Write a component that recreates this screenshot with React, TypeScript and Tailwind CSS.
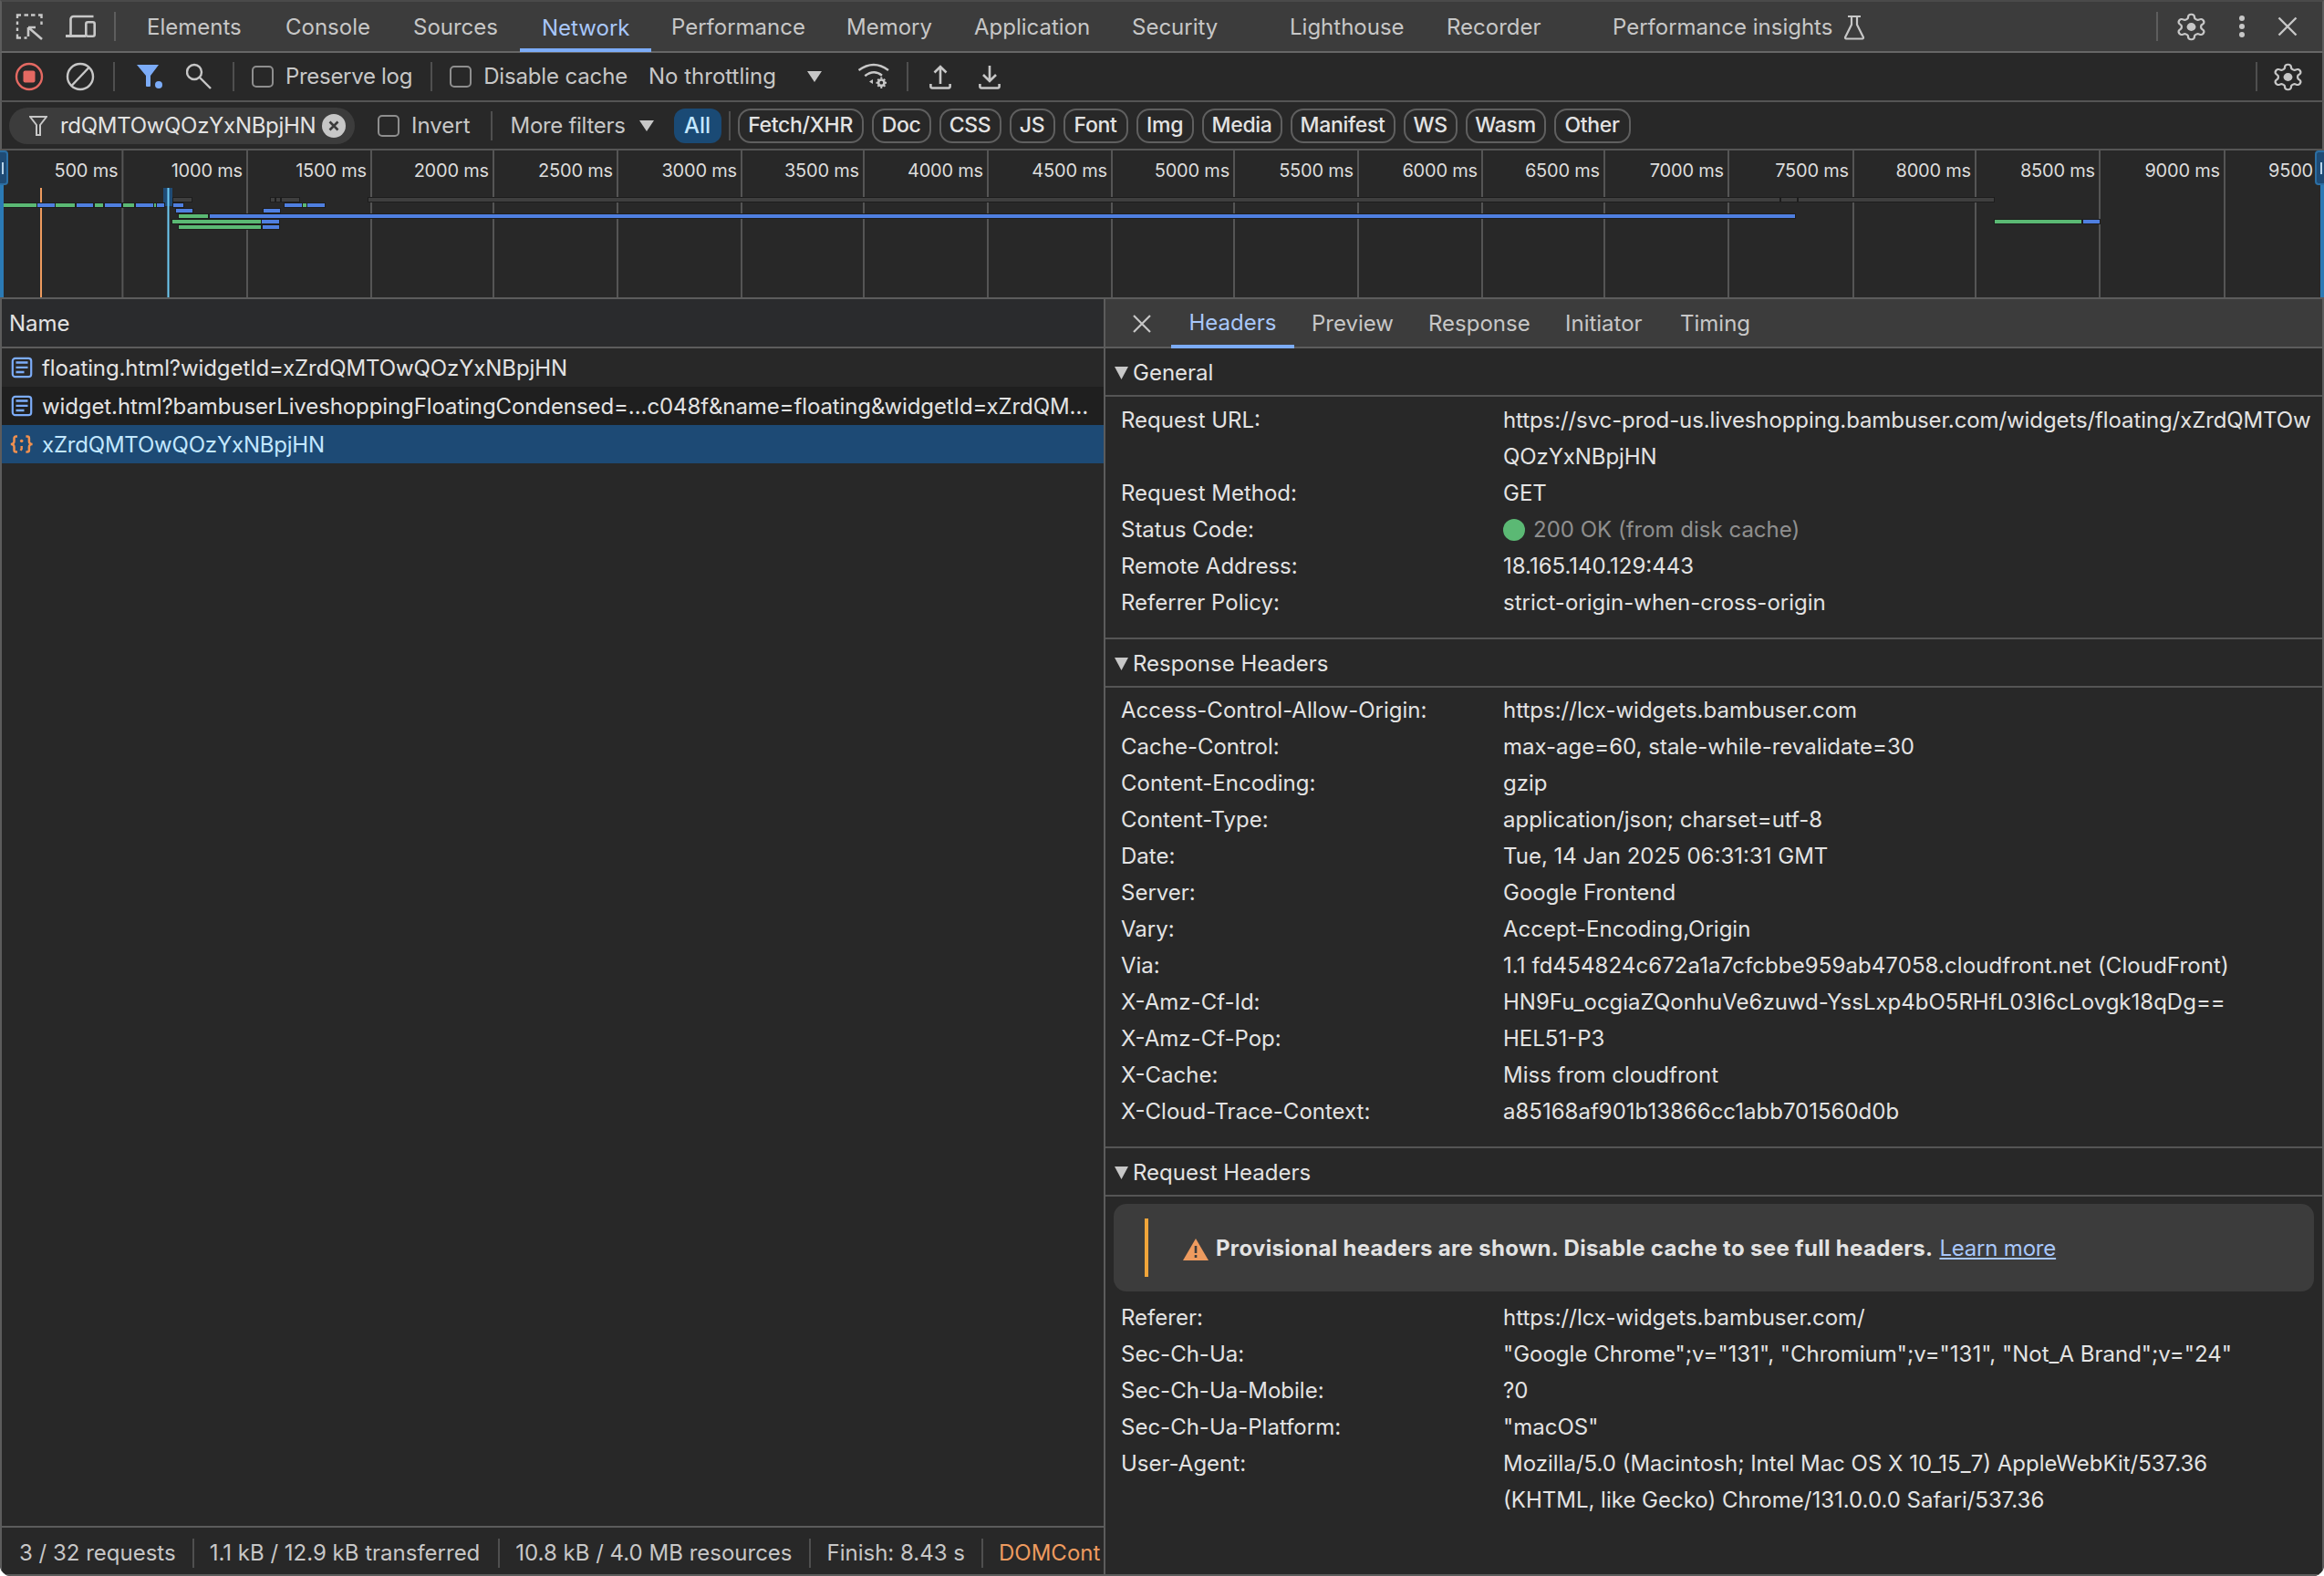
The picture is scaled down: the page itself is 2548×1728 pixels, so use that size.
import { ReactNode } from "react";

const mainTabs = [
  { label: "Elements", cls: "w-[152px]" },
  { label: "Console", cls: "w-[140px]" },
  { label: "Sources", cls: "w-[141px]" },
  { label: "Network", cls: "w-[142px]", active: true },
  { label: "Performance", cls: "w-[192px]" },
  { label: "Memory", cls: "w-[140px]" },
  { label: "Application", cls: "w-[173px]" },
  { label: "Security", cls: "w-[173px]" },
  { label: "Lighthouse", cls: "w-[172px]" },
  { label: "Recorder", cls: "w-[182px]" },
];

const typeChips = [
  { label: "Fetch/XHR", cls: "w-[138px]" },
  { label: "Doc", cls: "w-[65px]" },
  { label: "CSS", cls: "w-[68px]" },
  { label: "JS", cls: "w-[50px]" },
  { label: "Font", cls: "w-[71px]" },
  { label: "Img", cls: "w-[63px]" },
  { label: "Media", cls: "w-[88px]" },
  { label: "Manifest", cls: "w-[115px]" },
  { label: "WS", cls: "w-[59px]" },
  { label: "Wasm", cls: "w-[88px]" },
  { label: "Other", cls: "w-[84px]" },
];

const ticks = [134.4, 271, 407, 541, 677, 813, 947, 1083, 1219, 1353, 1489, 1625, 1759, 1895, 2032, 2166, 2302, 2439];

const green = "#5bb974";
const blue = "#4f7fe0";
const gray = "#3f3f3f";

// x1, x2, y (from the top of the overview), colour
const bars: [number, number, number, string][] = [
  [190, 210, 54, gray],
  [297, 301, 54, gray],
  [303, 307, 54, gray],
  [309, 328, 54, gray],
  [404, 1951, 54, gray],
  [1953, 1970, 54, gray],
  [1972, 2186, 54, gray],
  [4, 40, 60, green],
  [41, 60, 60, blue],
  [61, 82, 60, green],
  [84, 102, 60, blue],
  [104, 113, 60, green],
  [115, 133, 60, blue],
  [135, 147, 60, green],
  [149, 168, 60, blue],
  [169, 171, 60, green],
  [172, 180, 60, blue],
  [190, 201, 60, blue],
  [312, 331, 60, blue],
  [332, 336, 60, green],
  [337, 356, 60, blue],
  [193, 211, 66, blue],
  [289, 307, 66, blue],
  [196, 228, 72, green],
  [230, 1968, 72, blue],
  [189, 286, 78, green],
  [287, 306, 78, blue],
  [2187, 2282, 78, green],
  [2284, 2302, 78, blue],
  [196, 286, 84, green],
  [288, 306, 84, blue],
];

const generalRows: [string, ReactNode][] = [
  [
    "Request URL:",
    <span className="tracking-[-0.1px]">
      https://svc-prod-us.liveshopping.bambuser.com/widgets/floating/xZrdQMTOw<br />QOzYxNBpjHN
    </span>,
  ],
  ["Request Method:", "GET"],
  [
    "Status Code:",
    <span className="flex items-center gap-[9px] text-[#8f8f8f]">
      <span className="h-6 w-6 rounded-full bg-[#5bb974]" />
      200 OK (from disk cache)
    </span>,
  ],
  ["Remote Address:", "18.165.140.129:443"],
  ["Referrer Policy:", "strict-origin-when-cross-origin"],
];

const responseRows: [string, ReactNode][] = [
  ["Access-Control-Allow-Origin:", "https://lcx-widgets.bambuser.com"],
  ["Cache-Control:", "max-age=60, stale-while-revalidate=30"],
  ["Content-Encoding:", "gzip"],
  ["Content-Type:", "application/json; charset=utf-8"],
  ["Date:", "Tue, 14 Jan 2025 06:31:31 GMT"],
  ["Server:", "Google Frontend"],
  ["Vary:", "Accept-Encoding,Origin"],
  ["Via:", <span className="tracking-[0.1px]">1.1 fd454824c672a1a7cfcbbe959ab47058.cloudfront.net (CloudFront)</span>],
  ["X-Amz-Cf-Id:", "HN9Fu_ocgiaZQonhuVe6zuwd-YssLxp4bO5RHfL03I6cLovgk18qDg=="],
  ["X-Amz-Cf-Pop:", "HEL51-P3"],
  ["X-Cache:", "Miss from cloudfront"],
  ["X-Cloud-Trace-Context:", "a85168af901b13866cc1abb701560d0b"],
];

const requestRows: [string, ReactNode][] = [
  ["Referer:", "https://lcx-widgets.bambuser.com/"],
  ["Sec-Ch-Ua:", '"Google Chrome";v="131", "Chromium";v="131", "Not_A Brand";v="24"'],
  ["Sec-Ch-Ua-Mobile:", "?0"],
  ["Sec-Ch-Ua-Platform:", '"macOS"'],
  ["User-Agent:", <>Mozilla/5.0 (Macintosh; Intel Mac OS X 10_15_7) AppleWebKit/537.36<br />(KHTML, like Gecko) Chrome/131.0.0.0 Safari/537.36</>],
];

function Sep({ className = "" }: { className?: string }) {
  return <div className={`w-[2px] shrink-0 bg-[#4f4f4f] ${className}`} />;
}

function Gear() {
  return (
    <svg width="37" height="33" viewBox="0 0 24 24" preserveAspectRatio="none" fill="none" stroke="#c7c7c7" strokeWidth="1.5" strokeLinejoin="round">
      <path d="M12.22 2h-.44a2 2 0 0 0-2 2v.18a2 2 0 0 1-1 1.73l-.43.25a2 2 0 0 1-2 0l-.15-.08a2 2 0 0 0-2.73.73l-.22.38a2 2 0 0 0 .73 2.73l.15.1a2 2 0 0 1 1 1.72v.51a2 2 0 0 1-1 1.74l-.15.09a2 2 0 0 0-.73 2.73l.22.38a2 2 0 0 0 2.73.73l.15-.08a2 2 0 0 1 2 0l.43.25a2 2 0 0 1 1 1.73V20a2 2 0 0 0 2 2h.44a2 2 0 0 0 2-2v-.18a2 2 0 0 1 1-1.73l.43-.25a2 2 0 0 1 2 0l.15.08a2 2 0 0 0 2.73-.73l.22-.39a2 2 0 0 0-.73-2.73l-.15-.08a2 2 0 0 1-1-1.74v-.5a2 2 0 0 1 1-1.74l.15-.09a2 2 0 0 0 .73-2.73l-.22-.38a2 2 0 0 0-2.73-.73l-.15.08a2 2 0 0 1-2 0l-.43-.25a2 2 0 0 1-1-1.73V4a2 2 0 0 0-2-2z" />
      <circle cx="12" cy="12" r="3.2" fill="#c7c7c7" stroke="none" />
    </svg>
  );
}

function Checkbox({ className = "" }: { className?: string }) {
  return <span className={`block h-6 w-6 shrink-0 rounded-[5px] border-2 border-[#8e8e8e] ${className}`} />;
}

function Caret({ className = "" }: { className?: string }) {
  return (
    <svg width="16" height="12" viewBox="0 0 16 12" className={`shrink-0 ${className}`}>
      <path d="M0 0h16L8 12z" fill="#c7c7c7" />
    </svg>
  );
}

function TabBar() {
  return (
    <div className="flex h-[58px] shrink-0 items-center border-x-2 border-b-2 border-t-2 border-x-[#5c5c5c] border-b-[#666666] border-t-[#4a4a4a] bg-[#3c3c3c] pl-[14px] pr-[27px]">
      <svg width="32" height="32" viewBox="0 0 32 32" fill="none" stroke="#c7c7c7" strokeWidth="2.4" className="shrink-0">
        <path d="M3 7V3.5h4M10.5 3.5h4.500M18 3.500h4.500M26 3.500h3.500V7M3 10.500v3.500M3 17.500v3.500M3 24.500v4h4M10.500 28.500h3M29.500 10.500v3.500" />
        <path d="M15 17h8M15 17v10M15 17l15 13" strokeWidth="2.6" />
      </svg>
      <svg width="34" height="28" viewBox="0 0 34 28" fill="none" stroke="#c7c7c7" strokeWidth="2.6" className="ml-[23px] shrink-0">
        <path d="M6.500 24V6a3 3 0 0 1 3-3h22" />
        <path d="M1 24.500h22" strokeWidth="3" />
        <rect x="23.300" y="9.300" width="9.400" height="15.400" rx="2" />
      </svg>
      <Sep className="ml-[20px] h-8 bg-[#5d5d5d]" />
      <div className="ml-[34px] flex h-full items-stretch">
        {mainTabs.map((t) => (
          <div key={t.label} className={`flex shrink-0 items-center ${t.cls}`}>
            <div
              className={`flex h-full items-center whitespace-nowrap border-b-[4px] pt-[5px] ${
                t.active
                  ? "-mb-[2px] -ml-[24px] border-[#7cacf8] px-[24px] text-[#a8c7fa]"
                  : "border-transparent text-[#c7c7c7]"
              }`}
            >
              {t.label}
            </div>
          </div>
        ))}
        <div className="flex items-center gap-[12px] whitespace-nowrap pt-[1px] text-[#c7c7c7]">
          Performance insights
          <svg width="24" height="28" viewBox="0 0 24 28" fill="none" stroke="#c7c7c7" strokeWidth="2.2" strokeLinejoin="round">
            <path d="M5 2h14M9 2v9L2 25a1.500 1.500 0 0 0 1 1.500h18a1.500 1.500 0 0 0 1-1.500l-7-14V2" />
          </svg>
        </div>
      </div>
      <div className="ml-auto flex items-center">
        <Sep className="h-8 bg-[#5d5d5d]" />
        <div className="ml-[18px]"><Gear /></div>
        <svg width="8" height="26" viewBox="0 0 8 26" className="ml-[33px]">
          <circle cx="4" cy="4" r="3" fill="#c7c7c7" />
          <circle cx="4" cy="13" r="3" fill="#c7c7c7" />
          <circle cx="4" cy="22" r="3" fill="#c7c7c7" />
        </svg>
        <svg width="22" height="22" viewBox="0 0 22 22" className="ml-[35px]" stroke="#c7c7c7" strokeWidth="2.4">
          <path d="M1.500 1.500l19 19M20.500 1.500l-19 19" />
        </svg>
      </div>
    </div>
  );
}

function Toolbar() {
  return (
    <div className="flex h-[54px] shrink-0 items-center border-x-2 border-b-2 border-x-[#5c5c5c] border-b-[#555555] pl-[14px] pr-[19px] text-[#c7c7c7]">
      <svg width="32" height="32" viewBox="0 0 32 32" className="shrink-0">
        <circle cx="16" cy="16" r="14" fill="none" stroke="#e46962" strokeWidth="2.4" />
        <rect x="9.500" y="9.500" width="13" height="13" rx="2" fill="#e46962" />
      </svg>
      <svg width="32" height="32" viewBox="0 0 32 32" fill="none" stroke="#c7c7c7" strokeWidth="2.4" className="ml-[24px] shrink-0">
        <circle cx="16" cy="16" r="14" />
        <path d="M25.500 6L6.500 26" />
      </svg>
      <Sep className="ml-[20px] h-8" />
      <svg width="30" height="28" viewBox="0 0 30 28" className="ml-[24px] shrink-0">
        <path d="M0 1h24l-9 12v11a1 1 0 0 1-1 1h-3a1 1 0 0 1-1-1V13z" fill="#7cacf8" />
        <circle cx="24" cy="23" r="4" fill="#7cacf8" />
      </svg>
      <svg width="30" height="30" viewBox="0 0 30 30" fill="none" stroke="#c7c7c7" strokeWidth="2.4" className="ml-[24px] shrink-0">
        <circle cx="9" cy="10" r="8" />
        <path d="M15 16l12 12" />
      </svg>
      <Sep className="ml-[21px] h-8" />
      <Checkbox className="ml-[19px]" />
      <span className="ml-[13px] whitespace-nowrap tracking-[-0.3px]">Preserve log</span>
      <Sep className="ml-[20px] h-8" />
      <Checkbox className="ml-[19px]" />
      <span className="ml-[13px] whitespace-nowrap tracking-[-0.15px]">Disable cache</span>
      <span className="ml-[23px] w-[174px] shrink-0 whitespace-nowrap">No throttling</span>
      <Caret />
      <svg width="36" height="30" viewBox="0 0 36 30" fill="none" stroke="#c7c7c7" strokeWidth="2.4" className="ml-[39px] shrink-0">
        <path d="M1.500 8Q18-4 34 8M8.300 14.300Q18 6.500 27 13.700" />
        <path d="M17 18v5l-4-2.500z" fill="#c7c7c7" stroke="none" />
        <circle cx="26.300" cy="21.700" r="3.200" strokeWidth="2.600" />
        <path d="M26.300 15.500v2M26.300 26v2M20.500 21.700h2M30 21.700h2M22.300 17.700l1.400 1.400M29 24.400l1.400 1.400M30.300 17.700l-1.400 1.400M23.700 24.400l-1.400 1.400" strokeWidth="2" />
      </svg>
      <Sep className="ml-[18px] h-8" />
      <svg width="24" height="28" viewBox="0 0 24 28" fill="none" stroke="#c7c7c7" strokeWidth="2.6" className="ml-[23px] shrink-0">
        <path d="M12 22V3M5.500 9.500L12 3l6.500 6.500M1.400 22v3a1.500 1.500 0 0 0 1.500 1.500h18.200a1.500 1.500 0 0 0 1.500-1.500v-3" />
      </svg>
      <svg width="24" height="28" viewBox="0 0 24 28" fill="none" stroke="#c7c7c7" strokeWidth="2.6" className="ml-[30px] shrink-0">
        <path d="M12 2v17M5 12l7 7 7-7M1.400 22v3a1.500 1.500 0 0 0 1.500 1.500h18.200a1.500 1.500 0 0 0 1.500-1.500v-3" />
      </svg>
      <div className="ml-auto flex items-center">
        <Sep className="h-8" />
        <div className="ml-[15px]"><Gear /></div>
      </div>
    </div>
  );
}

function FilterBar() {
  return (
    <div className="flex h-[53px] shrink-0 items-center border-x-2 border-b-2 border-x-[#5c5c5c] border-b-[#555555] pl-[8px] text-[#c7c7c7]">
      <div className="flex h-10 w-[379px] shrink-0 items-center rounded-full bg-[#3c3c3c] pl-[22px] text-[#e3e3e3]">
        <svg width="20" height="22" viewBox="0 0 20 22" fill="none" stroke="#c7c7c7" strokeWidth="2" className="shrink-0">
          <path d="M1 1h18l-7 9v11h-4V10z" />
        </svg>
        <span className="ml-[14px] w-[287px] shrink-0 whitespace-nowrap tracking-[-0.3px]">rdQMTOwQOzYxNBpjHN</span>
        <svg width="26" height="26" viewBox="0 0 26 26" className="shrink-0">
          <circle cx="13" cy="13" r="13" fill="#c7c7c7" />
          <path d="M8.500 8.500l9 9M17.500 8.500l-9 9" stroke="#3c3c3c" strokeWidth="2.600" />
        </svg>
      </div>
      <Checkbox className="ml-[25px]" />
      <span className="ml-[13px]">Invert</span>
      <Sep className="ml-[22px] h-8" />
      <span className="ml-[20px] whitespace-nowrap tracking-[-0.3px]">More filters</span>
      <Caret className="ml-[15px]" />
      <span className="ml-[22px] flex h-[38px] w-[52px] shrink-0 items-center justify-center rounded-[12px] bg-[#1a4a75] font-medium text-[#c2e7ff]">All</span>
      <Sep className="ml-[8px] h-8" />
      <div className="ml-[8px] flex items-center gap-[9px]">
        {typeChips.map((c) => (
          <span key={c.label} className={`flex h-[38px] shrink-0 items-center justify-center whitespace-nowrap rounded-[14px] border-2 border-[#5f5f5f] text-[23px] font-medium tracking-[-0.3px] text-[#e3e3e3] ${c.cls}`}>
            {c.label}
          </span>
        ))}
      </div>
    </div>
  );
}

function Overview() {
  const labelCells = ticks.map((x, i) => ({
    label: `${(i + 1) * 500} ms`,
    w: x - (i === 0 ? 0 : ticks[i - 1]),
  }));
  return (
    <div className="relative h-[163px] shrink-0 overflow-hidden border-b-2 border-[#5c5c5c]">
      <svg width="2548" height="161" className="absolute left-0 top-0">
        {ticks.map((x) => (
          <line key={x} x1={x} x2={x} y1="0" y2="161" stroke="#555555" strokeWidth="2" />
        ))}
        <line x1="45" x2="45" y1="41" y2="161" stroke="#ee9b5f" strokeWidth="2" />
        <rect x="179" y="41" width="10" height="20" fill="#1f4b75" />
        {bars.map(([a, b, y, c], i) => (
          <rect key={i} x={a} y={y - 2} width={b - a} height="4" fill={c} stroke="#1d1d1d" strokeWidth="2" paintOrder="stroke" />
        ))}
        <line x1="184.5" x2="184.5" y1="41" y2="161" stroke="#6ecbf5" strokeWidth="2" />
        <rect x="0" y="0" width="4" height="161" fill="#2b7ab5" />
        <rect x="2544" y="0" width="4" height="161" fill="#2b7ab5" />
      </svg>
      <div className="relative flex h-[43px] items-center text-[20px] tracking-[-0.2px] text-[#dcdcdc]">
        {labelCells.map((c) => (
          <div key={c.label} style={{ width: c.w }} className="flex shrink-0 justify-end whitespace-nowrap pr-[5px]">
            {c.label}
          </div>
        ))}
        <div className="w-[135px] shrink-0 whitespace-nowrap pl-[48px]">9500 ms</div>
      </div>
      <div className="absolute left-0 top-0 h-[38px] w-[9px] rounded-r-[4px] border-2 border-l-0 border-[#2b6ea3] bg-[#1f4b75]" />
      <div className="absolute left-[2px] top-[13px] h-[13px] w-[2px] bg-[#b8d4ea]" />
      <div className="absolute right-0 top-0 h-[38px] w-[10px] rounded-l-[4px] border-2 border-r-0 border-[#2b6ea3] bg-[#1f4b75]" />
      <div className="absolute right-[2px] top-[13px] h-[13px] w-[2px] bg-[#b8d4ea]" />
    </div>
  );
}

function DocIcon() {
  return (
    <svg width="24" height="24" viewBox="0 0 24 24" fill="none" stroke="#7cacf8" className="shrink-0">
      <rect x="1.800" y="1.800" width="20.400" height="20.400" rx="3" strokeWidth="2.200" />
      <path d="M5.500 6.500h13M5.500 11.800h13M5.500 17h9" strokeWidth="2.300" />
    </svg>
  );
}

function RequestList() {
  return (
    <div className="flex w-[1210px] shrink-0 flex-col border-r-2 border-[#5c5c5c]">
      <div className="flex h-[54px] shrink-0 items-center border-b-2 border-[#5c5c5c] bg-[#2a2b2d] pl-[8px] pt-[2px] text-[#e3e3e3]">Name</div>
      <div className="flex h-[42px] items-center gap-[10px] pl-[10px] tracking-[-0.1px] text-[#e3e3e3]">
        <DocIcon />
        <span className="whitespace-nowrap pt-[1px]">floating.html?widgetId=xZrdQMTOwQOzYxNBpjHN</span>
      </div>
      <div className="flex h-[42px] items-center gap-[10px] bg-[#1f1f1f] pl-[10px] tracking-[-0.1px] text-[#e3e3e3]">
        <DocIcon />
        <span className="whitespace-nowrap pt-[1px]">widget.html?bambuserLiveshoppingFloatingCondensed=…c048f&amp;name=floating&amp;widgetId=xZrdQM…</span>
      </div>
      <div className="flex h-[42px] items-center gap-[8px] bg-[#1d4a75] pl-[8px] tracking-[-0.2px] text-[#c2e7ff]">
        <svg width="28" height="20" viewBox="0 0 28 20" fill="none" stroke="#f0904f" strokeWidth="2.500" className="shrink-0">
          <path d="M9 1.500H7.500a2 2 0 0 0-2 2v3.500a3 3 0 0 1-3.500 3 3 3 0 0 1 3.500 3v3.500a2 2 0 0 0 2 2H9M18.400 1.500h1.500a2 2 0 0 1 2 2v3.500a3 3 0 0 0 3.500 3 3 3 0 0 0-3.500 3v3.500a2 2 0 0 1-2 2h-1.500" />
          <circle cx="13.700" cy="6.500" r="1.800" fill="#f0904f" stroke="none" />
          <path d="M13.700 12v3l-1 2" strokeWidth="2.400" />
        </svg>
        <span className="whitespace-nowrap pt-[1px]">xZrdQMTOwQOzYxNBpjHN</span>
      </div>
      <div className="flex-1" />
      <div className="flex h-[53px] shrink-0 items-center whitespace-nowrap border-t-2 border-[#5c5c5c] pl-[19px] pt-[5px] text-[#c7c7c7]">
        <span>3 / 32 requests</span>
        <Sep className="ml-[18px] h-8" />
        <span className="ml-[17px]">1.1 kB / 12.9 kB transferred</span>
        <Sep className="ml-[20px] h-8" />
        <span className="ml-[17px]">10.8 kB / 4.0 MB resources</span>
        <Sep className="ml-[18px] h-8" />
        <span className="ml-[18px]">Finish: 8.43 s</span>
        <Sep className="ml-[18px] h-8" />
        <span className="ml-[17px] text-[#ee9b5f]">DOMCont</span>
      </div>
    </div>
  );
}

function KvRows({ rows }: { rows: [string, ReactNode][] }) {
  return (
    <div className="grid grid-cols-[419px_1fr] pl-[17px] leading-[40px] text-[#e3e3e3]">
      {rows.map(([k, v]) => (
        <div key={k} className="contents">
          <div className="whitespace-nowrap">{k}</div>
          <div className="whitespace-nowrap">{v}</div>
        </div>
      ))}
    </div>
  );
}

function SectionHeader({ title }: { title: string }) {
  return (
    <div className="flex h-[53px] shrink-0 items-center gap-[5px] border-b-2 border-[#555555] pl-[10px] pt-[2px] text-[#e3e3e3]">
      <svg width="15" height="14" viewBox="0 0 15 14">
        <path d="M0 0h15L7.500 14z" fill="#c7c7c7" />
      </svg>
      {title}
    </div>
  );
}

function DetailPane() {
  return (
    <div className="flex min-w-0 flex-1 flex-col">
      <div className="flex h-[54px] shrink-0 items-stretch border-b-2 border-[#5c5c5c] bg-[#3c3c3c] pt-[2px] text-[#c7c7c7]">
        <div className="flex w-[72px] items-center justify-end">
          <svg width="20" height="20" viewBox="0 0 20 20" stroke="#c7c7c7" strokeWidth="2.200" className="mr-[22px]">
            <path d="M1 1l18 18M19 1L1 19" />
          </svg>
        </div>
        <div className="-mb-[2px] flex w-[135px] items-center justify-center border-b-[4px] border-[#7cacf8] text-[#a8c7fa]">Headers</div>
        <div className="flex w-[128px] items-center pl-[19px]">Preview</div>
        <div className="flex w-[150px] items-center pl-[19px]">Response</div>
        <div className="flex w-[126px] items-center pl-[19px]">Initiator</div>
        <div className="flex items-center pl-[19px]">Timing</div>
      </div>
      <SectionHeader title="General" />
      <div className="pb-[18px] pt-[6px]">
        <KvRows rows={generalRows} />
      </div>
      <div className="border-t-2 border-[#555555]" />
      <SectionHeader title="Response Headers" />
      <div className="pb-[18px] pt-[5px]">
        <KvRows rows={responseRows} />
      </div>
      <div className="border-t-2 border-[#555555]" />
      <SectionHeader title="Request Headers" />
      <div className="mx-[9px] mt-[8px] flex h-24 items-center rounded-[14px] bg-[#3c3c3c] pl-[34px] text-[#e3e3e3]">
        <div className="h-16 w-1 bg-[#f0a53a]" />
        <svg width="28" height="24" viewBox="0 0 28 24" className="ml-[38px] mt-[4px] shrink-0">
          <path d="M14 0l14 24H0z" fill="#ee9b5f" />
          <path d="M14 8v8M14 18v3" stroke="#3c3c3c" strokeWidth="2.600" />
        </svg>
        <span className="ml-[8px] whitespace-nowrap pt-[1px] font-bold tracking-[0.32px]">Provisional headers are shown. Disable cache to see full headers.</span>
        <span className="ml-[7px] whitespace-nowrap pt-[1px] tracking-[-0.2px] text-[#a8c7fa] underline underline-offset-2">Learn more</span>
      </div>
      <div className="mt-[9px]">
        <KvRows rows={requestRows} />
      </div>
    </div>
  );
}

export default function App() {
  return (
    <div className="flex h-[1728px] w-[2548px] flex-col overflow-hidden rounded-b-[12px] bg-[#282828] font-['Inter',sans-serif] text-[24px]">
      <TabBar />
      <Toolbar />
      <FilterBar />
      <Overview />
      <div className="flex min-h-0 flex-1 border-x-2 border-b-2 border-[#5c5c5c]">
        <RequestList />
        <DetailPane />
      </div>
    </div>
  );
}
